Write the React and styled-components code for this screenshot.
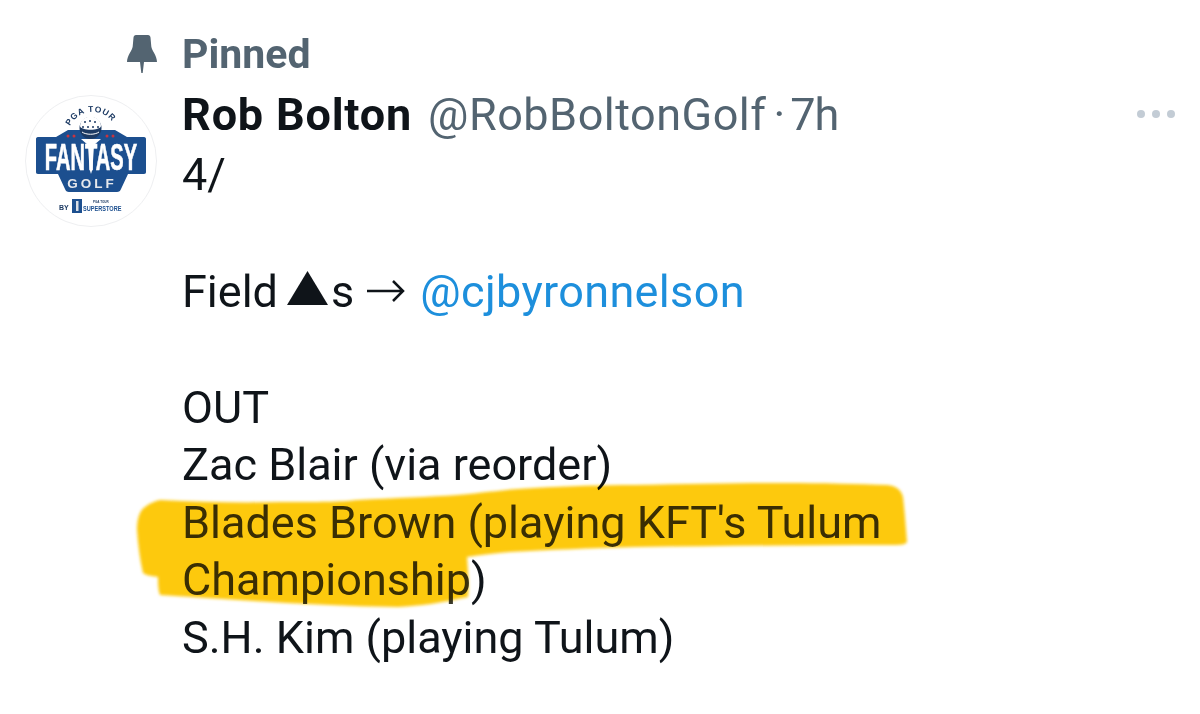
import React from 'react';
import styled, { createGlobalStyle } from 'styled-components';

const GlobalStyle = createGlobalStyle`
  html, body {
    margin: 0;
    padding: 0;
    background: #fff;
  }
  body {
    font-family: "Roboto", "Liberation Sans", sans-serif;
    color: #0f1419;
  }
`;

const Tweet = styled.article`
  position: relative;
  width: 1200px;
  height: 714px;
  overflow: hidden;
  box-sizing: border-box;
  padding: 25px 0 0 25px;
  display: grid;
  grid-template-columns: 132px 1fr;
  column-gap: 25px;
  grid-template-rows: 57px auto;
`;

const PinIconCell = styled.div`
  display: flex;
  justify-content: flex-end;
  align-items: flex-start;
  padding-top: 10px;
`;

const PinnedLabel = styled.div`
  font-size: 41px;
  line-height: 58px;
  font-weight: 700;
  color: #536471;
`;

const Avatar = styled.svg`
  display: block;
  width: 132px;
  height: 132px;
  margin-top: 13px;
`;

const Body = styled.div`
  display: flex;
  flex-direction: column;
`;

const Header = styled.div`
  display: flex;
  align-items: center;
  height: 64px;
  font-size: 45px;
  white-space: nowrap;
`;

const Name = styled.span`
  font-weight: 700;
  letter-spacing: 0.8px;
  margin-right: 16px;
`;

const Handle = styled.span`
  color: #536471;
  letter-spacing: 0.5px;
`;

const Sep = styled.span`
  color: #536471;
  margin: 0 5px 0 7px;
`;

const Age = styled.span`
  color: #536471;
  letter-spacing: -1px;
`;

const Dots = styled.div`
  position: absolute;
  top: 110px;
  right: 25px;
  display: flex;
  gap: 7px;
`;

const Dot = styled.span`
  width: 8px;
  height: 8px;
  border-radius: 50%;
  background: #c3ccd5;
`;

const Line = styled.div`
  font-size: 45px;
  white-space: nowrap;
  display: flex;
  align-items: center;
  height: ${p => p.$h || 57.5}px;
`;

const Marked = styled.span`
  color: #3a3a2a;
`;

const Mention = styled.span`
  color: #1d8fdc;
  margin-left: 15px;
  letter-spacing: 0.35px;
`;

const Triangle = styled.svg`
  width: 41px;
  height: 34px;
  margin: 0 3px 6px 9px;
`;

const Arrow = styled.svg`
  width: 38px;
  height: 24px;
  margin-left: 13px;
`;

const Highlight = styled.svg`
  position: absolute;
  left: 0;
  top: 0;
  width: 1200px;
  height: 714px;
  mix-blend-mode: multiply;
  pointer-events: none;
`;

const LOGO_BLUE = '#1c4f8f';
const LOGO_DARK = '#1c3a63';
const LOGO_FONT = 'Liberation Sans, sans-serif';

const Logo = () => (
  <Avatar viewBox="0 0 132 132">
    <defs>
      <path id="tourArc" d="M45 31 A 25 25 0 0 1 90 31" />
    </defs>
    <circle cx="66" cy="66" r="65.500" fill="#fff" stroke="#eeeff1" />
    <path fill={LOGO_BLUE} d="M13 42h18l12-7h47l12 7h17c1.500 0 2 1 2 2v33c0 1-.5 2-2 2h-16l-7 15c-.6 2-2 3-4 3H44c-2 0-3.400-1-4-3l-7-15H13c-1.500 0-2-1-2-2V44c0-1 .5-2 2-2z" />
    <circle cx="65.500" cy="33" r="11" fill={LOGO_DARK} />
    <path fill="#fff" d="M55 31c.5-6 5-9.500 10.500-9.500S75.500 25 76 31c-1 5-20 5-21 0z" />
    <path fill="none" stroke="#fff" strokeWidth="1" d="M57 37c4 3 13 3 17 0" />
    <g fill={LOGO_DARK}>
      <circle cx="60" cy="27" r="1" /><circle cx="65" cy="26" r="1" /><circle cx="70" cy="27" r="1" />
      <circle cx="58" cy="32" r="1" /><circle cx="63" cy="32" r="1" /><circle cx="68" cy="32" r="1" /><circle cx="73" cy="32" r="1" />
    </g>
    <g fill="#c8343f">
      <circle cx="43" cy="41" r="1.500" /><circle cx="49" cy="41" r="1.500" /><circle cx="82" cy="41" r="1.500" /><circle cx="88" cy="41" r="1.500" />
    </g>
    <path fill="#fff" d="M56 44h20l-7 6-1.500 24-1.500 5-1.500-5-1.500-24z" />
    <text transform="translate(66 75) scale(.543 1)" textAnchor="middle" fontFamily={LOGO_FONT} fontWeight="700" fontSize="37" fill="#fff" stroke="#fff" strokeWidth="0.7">FANTASY</text>
    <text x="67" y="93" textAnchor="middle" fontFamily={LOGO_FONT} fontWeight="700" fontSize="13.500" letterSpacing="3" fill="#e6e8ec">GOLF</text>
    <text fontFamily={LOGO_FONT} fontWeight="700" fontSize="8.500" letterSpacing="0.8" fill={LOGO_DARK}>
      <textPath href="#tourArc">PGA TOUR</textPath>
    </text>
    <text x="34" y="115" fontFamily={LOGO_FONT} fontWeight="700" fontSize="7" fill={LOGO_DARK}>BY</text>
    <rect x="47" y="104" width="10" height="14" fill={LOGO_BLUE} />
    <rect x="51" y="106" width="2.500" height="10" fill="#d9dee6" />
    <text x="68" y="108" fontFamily={LOGO_FONT} fontWeight="700" fontSize="3" fill={LOGO_DARK}>PGA TOUR</text>
    <text transform="translate(58 115.500) scale(.8 1)" fontFamily={LOGO_FONT} fontWeight="700" fontSize="7" fill={LOGO_BLUE}>SUPERSTORE</text>
  </Avatar>
);

const App = () => (
  <>
    <GlobalStyle />
    <Tweet>
      <PinIconCell>
        <svg width="30" height="38" viewBox="0 0 30 38">
          <path fill="#536471" d="M9 0h12c1.500 0 2.300 1 2.500 2.500l.8 9c.4 4 5.700 9 5.700 15.500H17l-1.300 11h-1.400L13 27H0c0-6.500 5.300-11.500 5.700-15.500l.8-9C6.700 1 7.500 0 9 0z" />
        </svg>
      </PinIconCell>
      <PinnedLabel>Pinned</PinnedLabel>
      <div>
        <Logo />
      </div>
      <Body>
        <Header>
          <Name>Rob Bolton</Name>
          <Handle>@RobBoltonGolf</Handle>
          <Sep>·</Sep>
          <Age>7h</Age>
        </Header>
        <Line>4/</Line>
        <Line />
        <Line $h={60}>
          Field
          <Triangle viewBox="0 0 41 34"><path fill="#0f1419" d="M20.500 0 41 34H0z" /></Triangle>
          s
          <Arrow viewBox="0 0 38 24"><path fill="none" stroke="#0f1419" strokeWidth="2.500" d="M0 12h36M26 2l10 10-10 10" /></Arrow>
          <Mention>@cjbyronnelson</Mention>
        </Line>
        <Line />
        <Line>OUT</Line>
        <Line>Zac Blair (via reorder)</Line>
        <Line><Marked>Blades Brown (playing KFT's Tulum</Marked></Line>
        <Line><Marked>Championship</Marked>)</Line>
        <Line>S.H. Kim (playing Tulum)</Line>
      </Body>
      <Dots><Dot /><Dot /><Dot /></Dots>
      <Highlight viewBox="0 0 1200 714">
        <defs>
          <filter id="soft"><feGaussianBlur stdDeviation="1.500" /></filter>
        </defs>
        <path fill="#fdc90f" filter="url(#soft)" d="M160 500C200 502 240 503 281 502C320 502 340 502 357 500C395 498 430 497 458 495C490 492 510 489 534 488C570 486 600 485 635 485C690 484 740 483 786 483C820 483 860 484 887 485C897 486 901 490 903 497C905 515 906 530 907 542C905 545 900 545 890 545C800 545 720 546 635 547C590 548 550 550 510 552C495 553 480 555 467 557C468 570 469 585 468 597C440 603 420 606 398 607C320 606 240 600 160 595C158 590 158 584 158 577C150 576 146 575 143 573C140 560 138 545 137 530C137 518 140 510 145 507C150 503 155 501 160 500z" />
      </Highlight>
    </Tweet>
  </>
);

export default App;
